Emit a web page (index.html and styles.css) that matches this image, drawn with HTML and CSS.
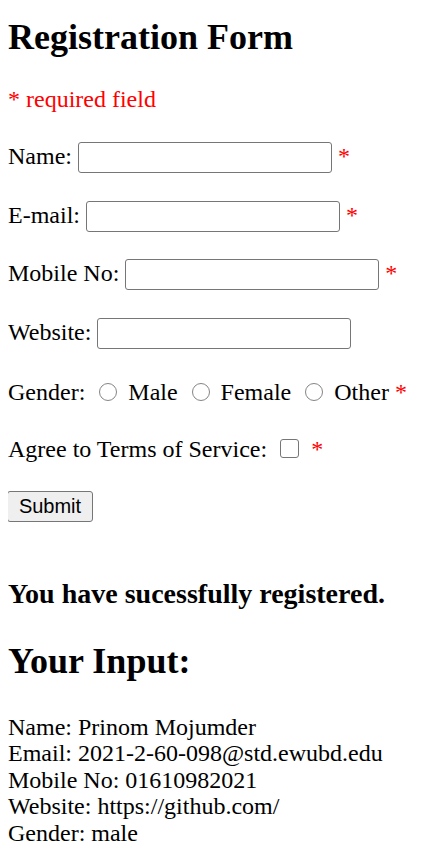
FILE: index.html
```html
<!DOCTYPE html>
<html>
<head>
<meta charset="utf-8">
<title>Registration Form</title>
<link rel="stylesheet" href="styles.css">
</head>
<body>
<h2 class="title">Registration Form</h2>
<p class="required"><span class="error">* required field</span></p>
<form class="form">
  <div class="row field-row">Name: <input type="text" class="text-input"> <span class="error">*</span></div>
  <div class="row field-row">E-mail: <input type="text" class="text-input"> <span class="error">*</span></div>
  <div class="row field-row">Mobile No: <input type="text" class="text-input"> <span class="error">*</span></div>
  <div class="row field-row">Website: <input type="text" class="text-input"></div>
  <div class="row choice-row">Gender: <input type="radio" name="gender" class="radio"> Male <input type="radio" name="gender" class="radio"> Female <input type="radio" name="gender" class="radio"> Other <span class="error">*</span></div>
  <div class="row choice-row">Agree to Terms of Service: <input type="checkbox" class="check"> <span class="error">*</span></div>
  <div class="submit-row"><input type="submit" value="Submit" class="submit"></div>
</form>
<h3 class="success">You have sucessfully registered.</h3>
<h2 class="input-title">Your Input:</h2>
<div class="output">
  Name: Prinom Mojumder<br>
  Email: 2021-2-60-098@std.ewubd.edu<br>
  Mobile No: 01610982021<br>
  Website: https://github.com/<br>
  Gender: male
</div>
</body>
</html>
```
FILE: styles.css
```css
html, body {
  background: #ffffff;
}
body {
  margin: 0 8px;
  font-family: "Liberation Serif", "Times New Roman", serif;
  font-size: 24px;
  line-height: 26.5px;
  color: #000000;
}
.title {
  font-size: 36px;
  line-height: 40px;
  font-weight: bold;
  margin: 17px 0 0 0;
}
.required {
  margin: 28.6px 0 0 0;
}
.error {
  color: #ff0000;
}
.form {
  margin: 30px 0 0 0;
}
.row {
  white-space: nowrap;
}
.field-row {
  height: 31px;
  display: flex;
  align-items: baseline;
  margin-bottom: 27.7px;
}
.field-row .text-input {
  margin: 0 6px;
}
.text-input {
  box-sizing: border-box;
  width: 254px;
  height: 31px;
  border: 1px solid #767676;
  border-radius: 3px;
  padding: 1px 3px;
  font-family: "Liberation Sans", Arial, sans-serif;
  font-size: 20px;
  background: #ffffff;
}
.choice-row {
  height: 26.5px;
  margin-top: 30px;
}
.radio {
  -webkit-appearance: none;
  appearance: none;
  box-sizing: border-box;
  width: 18px;
  height: 18px;
  border: 1.3px solid #858585;
  border-radius: 50%;
  margin: 0 5px 0 8px;
  vertical-align: -1px;
  background: #ffffff;
}
.check {
  -webkit-appearance: none;
  appearance: none;
  box-sizing: border-box;
  width: 19px;
  height: 19px;
  border: 1.5px solid #767676;
  border-radius: 3px;
  margin: 0 6px 0 7px;
  vertical-align: -1px;
  background: #ffffff;
}
.submit-row {
  margin-top: 29px;
  height: 31px;
}
.submit {
  box-sizing: border-box;
  width: 86px;
  height: 31px;
  margin: 0 0 0 -1px;
  padding: 0;
  border: 1px solid #767676;
  border-radius: 3px;
  background: #efefef;
  color: #000000;
  font-family: "Liberation Sans", Arial, sans-serif;
  font-size: 20px;
  display: block;
}
.success {
  font-size: 28px;
  line-height: 32px;
  font-weight: bold;
  margin: 56px 0 0 0;
}
.input-title {
  font-size: 36px;
  line-height: 40px;
  font-weight: bold;
  margin: 31px 0 0 0;
}
.output {
  margin-top: 32.5px;
}
```
